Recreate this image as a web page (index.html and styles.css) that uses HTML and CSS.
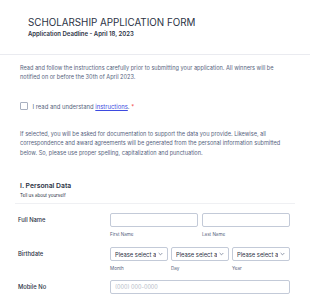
FILE: index.html
```html
<!DOCTYPE html>
<html lang="en">
<head>
<meta charset="utf-8">
<title>Scholarship Application Form</title>
<link rel="stylesheet" href="styles.css">
</head>
<body>
<header class="head">
  <h1 class="title">SCHOLARSHIP APPLICATION FORM</h1>
  <p class="deadline">Application Deadline - April 18, 2023</p>
</header>
<main class="form">
  <p class="text intro">Read and follow the instructions carefully prior to submitting your application. All winners will be notified on or before the 30th of April 2023.</p>
  <label class="check">
    <span class="box"></span>
    <span class="check-text">I read and understand <a href="#" class="link">instructions</a>. <span class="req">*</span></span>
  </label>
  <p class="text note">If selected, you will be asked for documentation to support the data you provide. Likewise, all correspondence and award agreements will be generated from the personal information submitted below. So, please use proper spelling, capitalization and punctuation.</p>
  <section class="section">
    <h2 class="sec-title">I. Personal Data</h2>
    <p class="sec-sub">Tell us about yourself</p>
  </section>
  <div class="row row-first">
    <div class="label">Full Name</div>
    <div class="fields two">
      <div class="field"><div class="input"></div><div class="sub">First Name</div></div>
      <div class="field"><div class="input"></div><div class="sub">Last Name</div></div>
    </div>
  </div>
  <div class="row row-date">
    <div class="label">Birthdate</div>
    <div class="fields three">
      <div class="field"><div class="input select"><span class="sel-text">Please select a</span><svg class="chev" viewBox="0 0 6 4"><path d="M0.8 0.8 L3 3 L5.2 0.8" fill="none" stroke="#57647e" stroke-width="0.8"/></svg></div><div class="sub">Month</div></div>
      <div class="field"><div class="input select"><span class="sel-text">Please select a</span><svg class="chev" viewBox="0 0 6 4"><path d="M0.8 0.8 L3 3 L5.2 0.8" fill="none" stroke="#57647e" stroke-width="0.8"/></svg></div><div class="sub">Day</div></div>
      <div class="field"><div class="input select"><span class="sel-text">Please select a</span><svg class="chev" viewBox="0 0 6 4"><path d="M0.8 0.8 L3 3 L5.2 0.8" fill="none" stroke="#57647e" stroke-width="0.8"/></svg></div><div class="sub">Year</div></div>
    </div>
  </div>
  <div class="row row-phone">
    <div class="label">Mobile No</div>
    <div class="fields one">
      <div class="input"><span class="ph">(000) 000-0000</span></div>
    </div>
  </div>
</main>
</body>
</html>
```
FILE: styles.css
```css
* { box-sizing: border-box; }
html, body { margin: 0; padding: 0; background: #fff; }
body {
  font-family: Inter, "Noto Sans", "Liberation Sans", sans-serif;
  color: #2c3345;
  width: 310px;
  height: 302px;
  overflow: hidden;
}
.head {
  padding: 17px 0 16px 28px;
  border-bottom: 1px solid #eaebf0;
}
.title {
  margin: 0;
  font-size: 9.8px;
  line-height: 12px;
  font-weight: 400;
  color: #2c3345;
}
.deadline {
  margin: 1px 0 0;
  font-size: 6px;
  line-height: 8px;
  font-weight: 600;
  color: #2c3345;
}
.form {
  padding: 0 15px;
}
.text {
  margin: 0;
  padding-left: 5px;
  font-size: 5.6px;
  line-height: 9.6px;
  color: #57647e;
}
.intro { margin-top: 8.5px; }
.check {
  display: flex;
  align-items: center;
  gap: 5px;
  margin-top: 19px;
  padding-left: 5px;
  height: 9px;
  font-size: 5.9px;
  color: #57647e;
}
.box {
  width: 7.5px;
  height: 7.5px;
  border: 0.8px solid #a8b0c0;
  border-radius: 1px;
  flex: none;
}
.link { color: #3d4ae0; text-decoration: underline; }
.req { color: #f23a3c; }
.note { margin-top: 19px; }
.section {
  margin-top: 22px;
  padding: 0 0 4.5px 5px;
  border-bottom: 1px solid #eff0f3;
}
.sec-title {
  margin: 0;
  font-size: 6.8px;
  line-height: 11px;
  font-weight: 600;
  color: #2c3345;
}
.sec-sub {
  margin: 0.5px 0 0;
  font-size: 4.5px;
  line-height: 7px;
  color: #2c3345;
}
.row {
  display: grid;
  grid-template-columns: 92px 180px;
  padding-left: 3px;
}
.row-first { margin-top: 9px; }
.row-date { margin-top: 9px; }
.row-phone { margin-top: 8px; }
.label {
  font-size: 5.8px;
  line-height: 14px;
  font-weight: 500;
  color: #2c3345;
}
.fields { display: grid; }
.two { grid-template-columns: 88px 88px; column-gap: 4px; }
.three { grid-template-columns: 58px 58px 58px; column-gap: 3px; }
.one { grid-template-columns: 180px; }
.input {
  height: 14px;
  border: 0.8px solid #c3cad8;
  border-radius: 2px;
  background: #fff;
  display: flex;
  align-items: center;
  padding: 0 4px;
}
.select { justify-content: space-between; overflow: hidden; }
.sel-text {
  font-size: 5.8px;
  color: #2c3345;
  white-space: nowrap;
  overflow: hidden;
  width: 41px;
}
.chev { width: 5px; height: 4px; flex: none; }
.ph { font-size: 5.5px; color: #b4bac6; }
.sub {
  font-size: 4.6px;
  line-height: 7px;
  padding-top: 4px;
  color: #57647e;
}
```
